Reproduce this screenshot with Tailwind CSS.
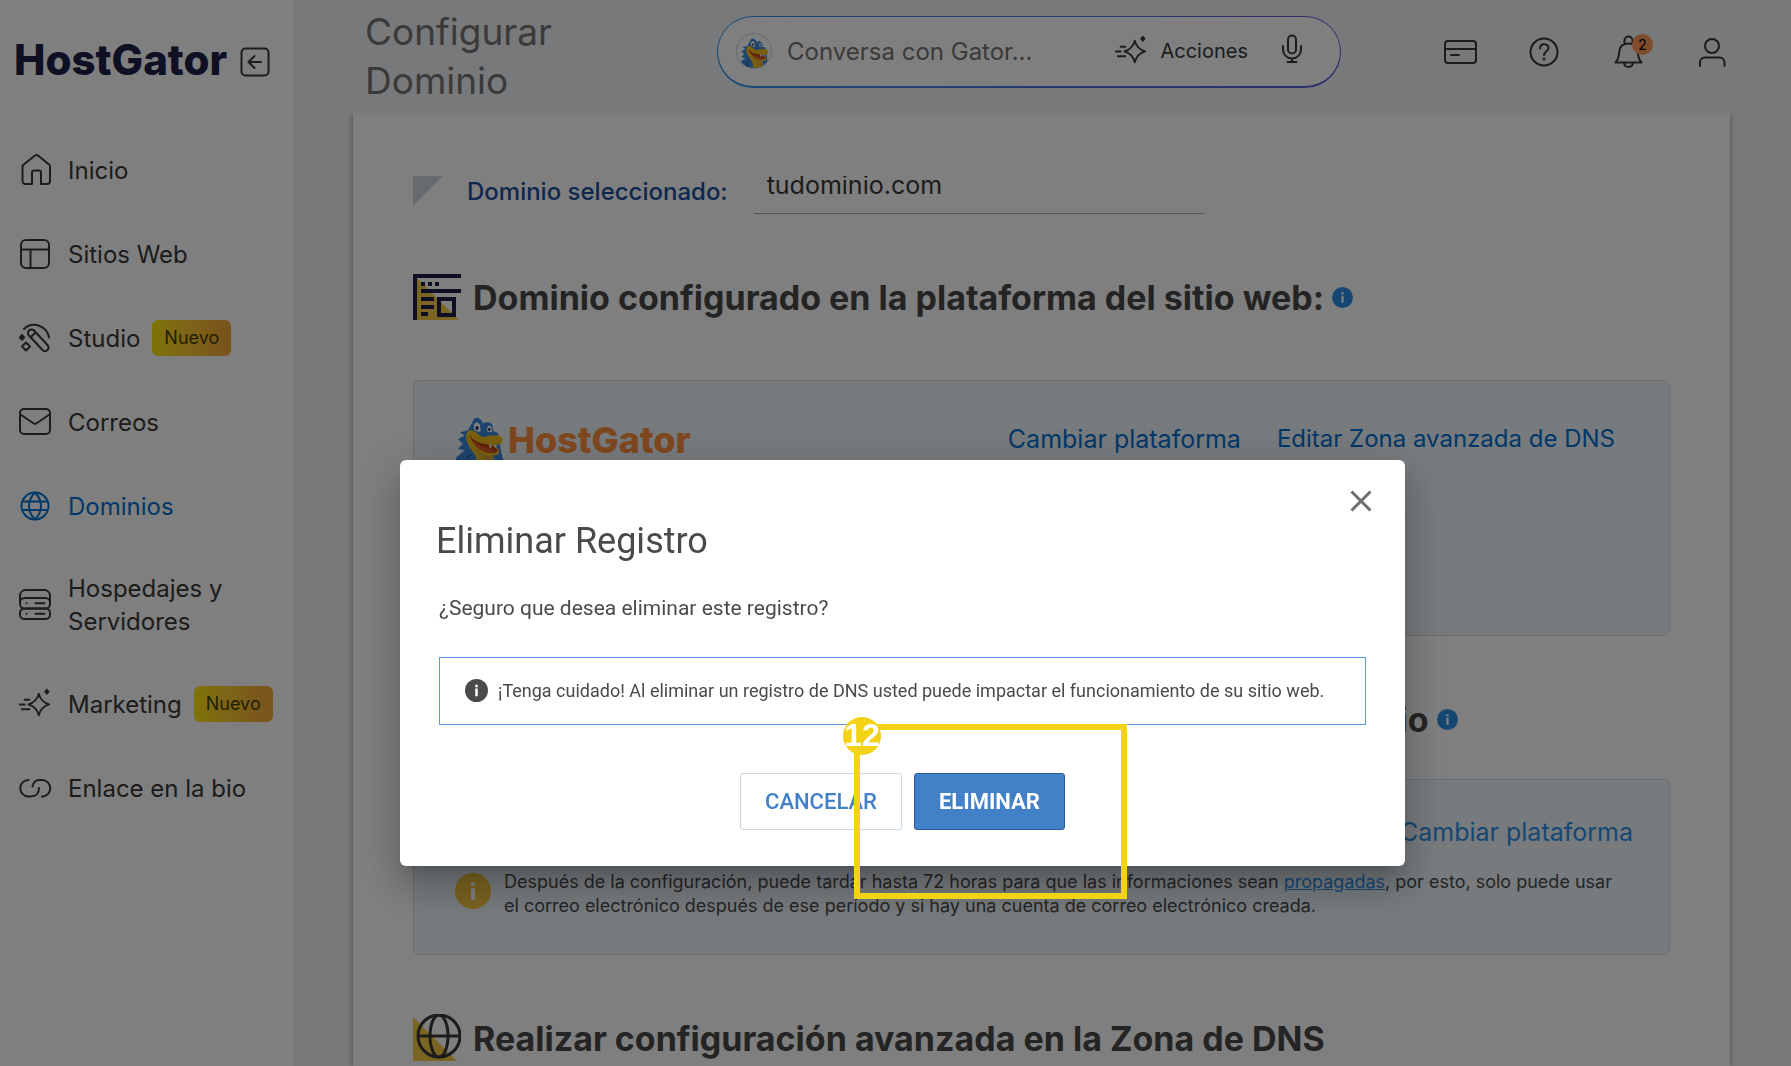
<!DOCTYPE html>
<html lang="es">
  <head>
    <meta charset="UTF-8" />
    <meta name="viewport" content="width=device-width, initial-scale=1.0" />
    <title>Configurar Dominio | HostGator</title>
    <script src="https://cdn.jsdelivr.net/npm/@tailwindcss/browser@4"></script>
  </head>
  <body class="h-screen overflow-hidden bg-[#f0f2f6] font-['Inter',sans-serif] text-[#383838]">
    <!-- Shared icons -->
    <svg class="hidden">
      <symbol id="gator" viewBox="158 52 150 150">
        <path d="M214 66C216 52 233 50 240 62L246 72C253 65 270 66 274 78L276 94L290 100L300 160L308 190L316 210H150L166 172L190 152L170 148L184 132L170 118L190 108L176 98L200 92Z" fill="#3a88dc" />
        <path d="M219 74c4-8 13-8 17 3l2 18c-10 3-18-1-21-9z" fill="#fff" />
        <path d="M258 82c4-6 11-5 13 2l1 12c-6 3-12 1-15-3z" fill="#fff" />
        <ellipse cx="227" cy="85" rx="4.500" ry="6" fill="#16284a" />
        <ellipse cx="264" cy="89" rx="3.500" ry="5" fill="#16284a" />
        <path d="M196 100C200 88 214 90 224 98C236 110 248 116 256 110C262 104 274 110 284 108C296 104 306 114 303 126C300 138 286 136 276 134L292 148C298 164 288 168 276 166L280 204H228C232 184 222 164 210 150C198 134 190 116 196 100Z" fill="#f3bf1c" />
        <path d="M205 106C214 124 240 134 268 134L290 150C286 164 262 162 244 154C224 144 210 126 205 106Z" fill="#c2410c" />
        <path d="M214 118C226 136 250 148 286 154C270 162 244 156 230 146C220 138 216 128 214 118Z" fill="#e8622a" />
        <path d="M262 134l5 14 5-13zM284 146l2-10-8-1z" fill="#fff" />
        <path d="M224 150c14 12 30 18 50 18l4 36c-16-14-40-30-54-54z" fill="#e0a93a" />
        <path d="M194 176l18-12M192 178c6 4 10 12 8 26" fill="none" stroke="#16284a" stroke-width="2" />
      </symbol>
      <symbol id="info" viewBox="0 0 24 24">
        <circle cx="12" cy="12" r="12" fill="currentColor" />
        <path d="M10.700 10h2.600v8h-2.600zM10.700 6h2.600v2.500h-2.600z" fill="#fff" />
      </symbol>
      <symbol id="spark" viewBox="0 0 36 36">
        <path d="M22 7c1.500 6 4.500 9.500 11 11.500-6.500 2-9.500 5.500-11 11.500-1.500-6-4.500-9.500-11-11.500 6.500-2 9.500-5.500 11-11.500zM7 13.500h5M2 18.500h5M4 23.500h8" fill="none" stroke="currentColor" stroke-width="2" stroke-linecap="round" stroke-linejoin="round" />
        <path d="M30.500 1.500l3 3.500-3 3.500-3-3.500z" fill="currentColor" />
      </symbol>
    </svg>

    <div class="flex h-full">
      <!-- Sidebar -->
      <aside class="w-[293px] shrink-0 bg-white">
        <div class="flex items-center gap-3 pt-9 pl-[14px]">
          <a href="#" class="w-[214px] text-[42px] leading-[48px] font-extrabold text-[#20204a]">HostGator</a>
          <button type="button" aria-label="Contraer menú" class="pt-1">
            <svg class="size-[30px]" viewBox="0 0 30 30" fill="none" stroke="currentColor" stroke-width="2" stroke-linecap="round" stroke-linejoin="round">
              <rect x="1.500" y="1.500" width="27" height="27" rx="4" />
              <path d="M21 15H9M14.500 9L8.500 15l6 6" />
            </svg>
          </button>
        </div>

        <nav class="mt-[68px] flex flex-col gap-12 pl-[18px] text-[24px] leading-[33px]">
          <a href="#" class="flex min-h-9 items-center gap-4">
            <svg class="size-[34px]" viewBox="0 0 34 34" fill="none" stroke="currentColor" stroke-width="2" stroke-linejoin="round">
              <path d="M4.500 12.500L17 2.500a2.500 2.500 0 0 1 3 0L31 11.500a2 2 0 0 1 1 2V28a3 3 0 0 1-3 3h-6V19.500a2 2 0 0 0-2-2h-5a2 2 0 0 0-2 2V31H7.500a3 3 0 0 1-3-3z" />
            </svg>
            Inicio
          </a>
          <a href="#" class="flex min-h-9 items-center gap-4">
            <svg class="size-[34px]" viewBox="0 0 34 34" fill="none" stroke="currentColor" stroke-width="2">
              <rect x="3" y="3" width="28" height="28" rx="5" />
              <path d="M3 12.500h28M12.500 12.500V31" />
            </svg>
            Sitios Web
          </a>
          <a href="#" class="flex min-h-9 items-center gap-4">
            <svg class="size-[34px]" viewBox="0 0 34 34" fill="none" stroke="currentColor" stroke-width="2" stroke-linecap="round" stroke-linejoin="round">
              <path d="M6 8A15 15 0 0 1 31 16.500" />
              <path d="M11 14.500a3.200 3.200 0 0 1 5-5L29.500 24a3.200 3.200 0 0 1-5 5zM12.500 16.500l5-5" />
              <path d="M8 21.500l4 4-4 4-4-4z" />
              <path d="M4 12.500l3.500 4L4 20 .500 16.500z" fill="currentColor" stroke="none" />
            </svg>
            Studio
            <span class="-ml-1 rounded-md bg-linear-to-r from-[#ffe60a] to-[#f2a53c] px-3 text-[18px] leading-9 text-[#453f00]">Nuevo</span>
          </a>
          <a href="#" class="flex min-h-9 items-center gap-4">
            <svg class="size-[34px]" viewBox="0 0 34 34" fill="none" stroke="currentColor" stroke-width="2" stroke-linejoin="round">
              <rect x="2" y="4" width="30" height="25" rx="4" />
              <path d="M2.500 9.500L15 18a3.500 3.500 0 0 0 4 0L31.500 9.500" />
            </svg>
            Correos
          </a>
          <a href="#" class="flex min-h-9 items-center gap-4 text-[#0070d2]">
            <svg class="size-[34px]" viewBox="0 0 34 34" fill="none" stroke="currentColor" stroke-width="2">
              <circle cx="17" cy="17" r="13.500" />
              <path d="M17 3.500c-8 8-8 19 0 27M17 3.500c8 8 8 19 0 27M4 12.500h26M4 21h26" />
            </svg>
            Dominios
          </a>
          <a href="#" class="flex min-h-9 items-center gap-4">
            <svg class="size-[34px] shrink-0" viewBox="0 0 34 34" fill="none" stroke="currentColor" stroke-width="2" stroke-linecap="round">
              <path d="M2 14V8a6 6 0 0 1 5-6h20a6 6 0 0 1 5 6v6" />
              <rect x="2" y="10" width="30" height="10.500" rx="4.500" />
              <rect x="2" y="20.500" width="30" height="10.500" rx="4.500" />
              <path d="M17.500 15.200h9M17.500 25.700h9M8.500 15.200h.1M8.500 25.700h.1" />
            </svg>
            <span class="w-[180px]">Hospedajes y Servidores</span>
          </a>
          <a href="#" class="flex min-h-9 items-center gap-4">
            <svg class="size-[34px]"><use href="#spark" /></svg>
            Marketing
            <span class="-ml-1 rounded-md bg-linear-to-r from-[#ffe60a] to-[#f2a53c] px-3 text-[18px] leading-9 text-[#453f00]">Nuevo</span>
          </a>
          <a href="#" class="flex min-h-9 items-center gap-4">
            <svg class="size-[34px]" viewBox="0 0 34 34" fill="none" stroke="currentColor" stroke-width="2" stroke-linecap="round">
              <path d="M14.500 15.500C15 11.500 18 9 21.500 9h2.500a8 8 0 0 1 0 16.500M10.500 9a8 8 0 0 0 0 16.500h2.500c4.500 0 8-3 8-8.500" />
            </svg>
            Enlace en la bio
          </a>
        </nav>
      </aside>

      <div class="flex min-w-0 flex-1 flex-col">
        <!-- Header -->
        <header class="relative z-10 flex h-[113px] shrink-0 items-center bg-[#f0f2f6] pr-[61px] pb-[2px] pl-[72px]">
          <h1 class="w-[352px] pr-[130px] text-[37px] leading-[49px] text-[#747474]">Configurar Dominio</h1>
          <form class="mb-2 min-w-0 flex-1 rounded-full bg-linear-to-r from-[#2890f0] to-[#5c58d0] px-px pt-px pb-[2px]">
            <div class="flex h-[69px] items-center rounded-full bg-white pr-8 pl-[18px]">
              <span class="flex size-9 shrink-0 items-end justify-center overflow-hidden rounded-full border border-[#c8d4d8]">
                <svg class="size-[30px]"><use href="#gator" /></svg>
              </span>
              <input type="text" aria-label="Conversa con Gator" placeholder="Conversa con Gator..." class="ml-[15px] min-w-0 flex-1 pt-[2px] text-[24px] outline-none placeholder:text-[#757575]" />
              <button type="button" class="flex items-center gap-3 text-[20px]">
                <svg class="size-[34px]"><use href="#spark" /></svg>
                Acciones
              </button>
              <button type="button" aria-label="Hablar" class="mb-1 ml-7">
                <svg class="size-8" viewBox="0 0 32 32" fill="none" stroke="currentColor" stroke-width="2" stroke-linecap="round">
                  <rect x="12" y="2.500" width="8" height="18" rx="4" />
                  <path d="M7 13v3.500a9 9 0 0 0 18 0V13M16 25.500V29M11.500 29h9" />
                </svg>
              </button>
            </div>
          </form>
          <div class="mb-2 ml-[101px] flex items-center gap-12">
            <button type="button" aria-label="Pagos">
              <svg class="size-9" viewBox="0 0 36 36" fill="none" stroke="currentColor" stroke-width="2" stroke-linecap="round">
                <rect x="3" y="7" width="31" height="22" rx="3" />
                <path d="M3 15h31M9 21h8" />
              </svg>
            </button>
            <button type="button" aria-label="Ayuda">
              <svg class="size-9" viewBox="0 0 36 36" fill="none" stroke="currentColor" stroke-width="2" stroke-linecap="round">
                <circle cx="18" cy="18" r="13.500" />
                <path d="M14 14.500c0-6 8.500-5.500 8.500-.5 0 3.500-4.500 3.500-4.500 7" />
                <path d="M18 25v.1" stroke-width="2.800" />
              </svg>
            </button>
            <button type="button" aria-label="Notificaciones" class="relative">
              <svg class="size-9" viewBox="0 0 36 36" fill="none" stroke="currentColor" stroke-width="2" stroke-linejoin="round">
                <path d="M14.500 10v-3.500a4 4 0 0 1 8 0V10M5.500 28.500c3.500-3.500 3.500-8 4-12 .5-4.500 4-7 9-7s8.500 2.500 9 7c.5 4 .5 8.500 4 12zM14 28.500c.5 6 8.500 6 9 0" />
              </svg>
              <span class="absolute top-0 left-[22px] size-[21px] rounded-full bg-[#ff9a57] text-[14px] leading-[21px] text-black">2</span>
            </button>
            <button type="button" aria-label="Mi cuenta">
              <svg class="size-9" viewBox="0 0 36 36" fill="none" stroke="currentColor" stroke-width="2" stroke-linecap="round">
                <circle cx="18" cy="12" r="7" />
                <path d="M6 32v-3.500a5 5 0 0 1 5-5h14.500a5 5 0 0 1 5 5V32" />
              </svg>
            </button>
          </div>
        </header>

        <!-- Domain settings -->
        <main class="mr-[61px] ml-[60px] flex-1 bg-white px-[60px] pt-[63px] shadow-[0_1px_5px_rgba(0,0,0,0.4)]">
          <div class="flex text-[24px]">
            <svg class="size-[30px]" viewBox="0 0 30 30"><path d="M0 0h30L0 30z" fill="#cdd6df" /></svg>
            <label for="domain" class="ml-6 leading-8 font-medium text-[#1c4f9c]">Dominio seleccionado:</label>
            <input id="domain" type="text" value="tudominio.com" class="ml-[26px] h-[38px] w-[450px] border-b border-[#a4acb8] px-[13px] pb-5 text-[25px] outline-none" />
          </div>

          <div class="mt-[59px] flex h-12 items-center gap-3">
            <svg class="size-12" viewBox="0 0 48 48">
              <path d="M4 5l42 42H4z" fill="#f5cd45" />
              <path d="M0 1h48v4H4v42H0zM8 9h4v4H8zM15 9h4v4h-4zM22 9h4v4h-4zM8 16h40v4H8zM8 24h13v4H8zM8 32h13v4H8zM8 39h7v4H8zM24 24h19v20H24zM28 28v12h11V28z" fill="#1c1c48" fill-rule="evenodd" />
            </svg>
            <h2 class="text-[34px] font-bold text-[#494949]">Dominio configurado en la plataforma del sitio web:</h2>
            <button type="button" aria-label="Más información" class="-ml-1 text-[#2d8fe6]"><svg class="size-[21px]"><use href="#info" /></svg></button>
          </div>

          <section class="mt-[59px] flex h-64 items-start justify-between rounded-md border border-[#d2dae2] bg-[#eef6fc] pt-9 pr-[54px] pl-10">
            <div class="flex items-center gap-1">
              <svg class="size-[50px]"><use href="#gator" /></svg>
              <span class="mb-1 text-[36px] leading-10 font-extrabold text-[#ff8f3c]">HostGator</span>
            </div>
            <div class="flex gap-9 pt-1 text-[24px] leading-9 text-[#0070d2]">
              <a href="#" class="text-[25px]">Cambiar plataforma</a>
              <a href="#">Editar Zona avanzada de DNS</a>
            </div>
          </section>

          <div class="mt-[59px] flex h-12 items-center gap-3">
            <svg class="size-12" viewBox="0 0 48 48" fill="none" stroke="#494949" stroke-width="3"><rect x="3" y="9" width="42" height="30" /><path d="M3 10l21 17 21-17" /></svg>
            <h2 class="text-[34px] font-bold whitespace-nowrap text-[#494949]">Servidor de correo electrónico configurado en su dominio</h2>
            <button type="button" aria-label="Más información" class="-ml-1 text-[#2d8fe6]"><svg class="size-[21px]"><use href="#info" /></svg></button>
          </div>

          <section class="mt-9 h-44 rounded-md border border-[#d2dae2] bg-[#eef6fc] pt-[34px] pr-9 pl-[41px]">
            <div class="flex justify-end text-[25px] leading-9 text-[#2d8fe6]">
              <a href="#">Cambiar plataforma</a>
            </div>
            <div class="mt-5 flex gap-[13px]">
              <svg class="mt-[3px] size-9 shrink-0 text-[#f5c540]"><use href="#info" /></svg>
              <p class="text-[18px] leading-6 text-[#4a4a4a]">
                Después de la configuración, puede tardar hasta 72 horas para que las informaciones sean
                <a href="#" class="text-[#2d8fe6] underline">propagadas</a>, por esto, solo puede usar<br />
                el correo electrónico después de ese período y si hay una cuenta de correo electrónico creada.
              </p>
            </div>
          </section>

          <div class="mt-[59px] flex h-12 items-center gap-3">
            <svg class="size-12" viewBox="0 0 48 48" fill="none">
              <path d="M0 3l44 44H0z" fill="#f5cd45" />
              <g stroke="#383838" stroke-width="3">
                <circle cx="26" cy="22" r="21" />
                <ellipse cx="26" cy="22" rx="9" ry="21" />
                <path d="M5 22h42" />
              </g>
            </svg>
            <h2 class="text-[34px] font-bold text-[#494949]">Realizar configuración avanzada en la Zona de DNS</h2>
          </div>
        </main>
      </div>
    </div>

    <!-- Delete record dialog -->
    <div class="fixed inset-0 z-20 flex items-start justify-center bg-black/50 pt-[460px] pl-[14px] font-['Roboto',sans-serif] text-[#4a4a4a]">
      <div role="dialog" aria-labelledby="dialog-title" class="relative w-full max-w-[1005px] rounded-md bg-white pt-[59px] pb-9 shadow-[0_11px_15px_-7px_rgba(0,0,0,0.2),0_24px_38px_3px_rgba(0,0,0,0.14),0_9px_46px_8px_rgba(0,0,0,0.12)]">
        <button type="button" aria-label="Cerrar" class="absolute top-[30px] right-[33px]">
          <svg class="size-[22px]" viewBox="0 0 22 22" stroke="#6e6e6e" stroke-width="3"><path d="M1.500 1.500l19 19M20.500 1.500l-19 19" /></svg>
        </button>
        <h2 id="dialog-title" class="px-9 text-[36px] leading-[44px]">Eliminar Registro</h2>
        <div class="px-[39px]">
          <p class="mt-[30px] text-[21px] leading-[30px]">¿Seguro que desea eliminar este registro?</p>
          <div class="mt-[34px] flex h-[68px] items-center gap-[10px] border border-[#5d9be0] pb-[2px] pl-[25px]">
            <svg class="size-[23px] shrink-0"><use href="#info" /></svg>
            <p class="text-[18px] whitespace-nowrap">¡Tenga cuidado! Al eliminar un registro de DNS usted puede impactar el funcionamiento de su sitio web.</p>
          </div>
          <div class="mt-12 flex justify-center gap-3 text-[22px]">
            <button type="button" class="h-[57px] rounded-[3px] border border-[#c8d8e4] px-6 font-medium text-[#4280c8]">CANCELAR</button>
            <button type="button" class="h-[57px] rounded-[3px] border border-[#2a5c9c] bg-[#4280c8] px-6 font-bold text-white">ELIMINAR</button>
          </div>
        </div>
        <!-- Step marker -->
        <div class="pointer-events-none absolute top-[264px] left-[454px] h-[175px] w-[273px] border-6 border-[#f4d216]"></div>
        <span class="pointer-events-none absolute top-[257px] left-[443px] flex size-[38px] items-center justify-center rounded-full bg-[#f4d216] pb-[2px] font-['Liberation_Sans',sans-serif] text-[32px] leading-none font-bold text-white">12</span>
      </div>
    </div>
  </body>
</html>
